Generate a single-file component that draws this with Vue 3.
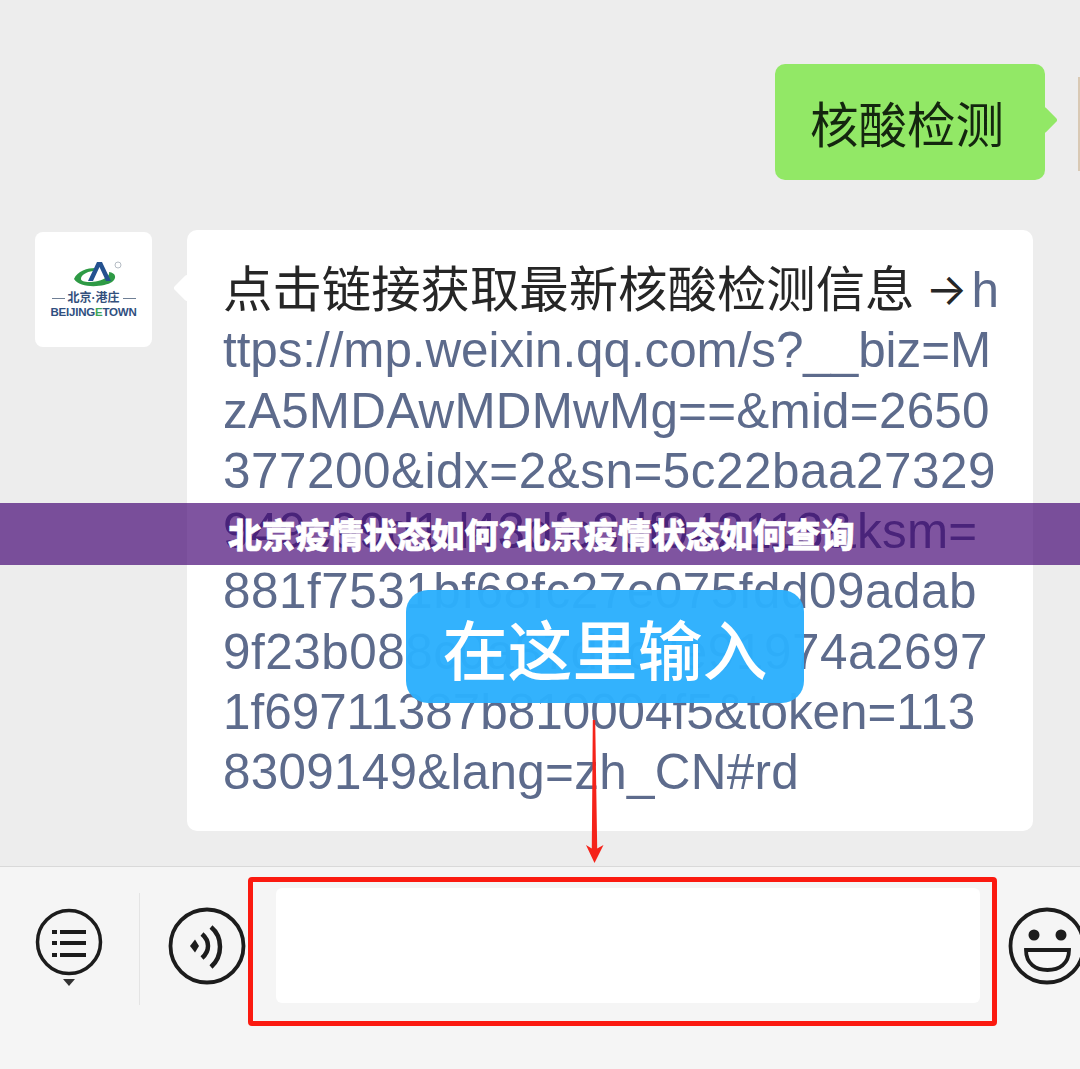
<template>
  <div class="screen">
    <div class="chat">
      <div class="row sent">
        <div class="bubble green">核酸检测</div>
        <div class="other-avatar"></div>
      </div>
      <div class="row received">
        <div class="avatar">
          <svg class="logo" width="50" height="28" viewBox="0 0 50 28">
            <path d="M2 18C5 10 16 7 23 7L21 10C14 11 9 14 9 18C9 21 17 22 26 20C34 18 38 14 37 11C44 12 45 17 40 21C33 26 8 28 2 18Z" fill="#2e9a45" />
            <path d="M25 1H30L39 20H34L27.500 6L21 20H16Z" fill="#24518f" />
            <circle cx="46" cy="4" r="3" fill="none" stroke="#b5bcc4" stroke-width="1" />
          </svg>
          <div class="logo-cn"><i></i>北京·港庄<i></i></div>
          <div class="logo-en">BEIJING<span>E</span>TOWN</div>
        </div>
        <div class="bubble white">
          <div class="line">点击链接获取最新核酸检测信息<span class="arrow-glyph">→</span><span class="link">h</span></div>
          <div
            v-for="l in linkLines"
            :key="l.text"
            class="line link"
            :style="{ letterSpacing: l.track + 'px' }"
          >{{ l.text }}</div>
        </div>
      </div>
    </div>

    <div class="bar">
      <svg class="ico-menu" width="72" height="84" viewBox="0 0 72 84">
        <circle cx="36" cy="36" r="31.500" fill="none" stroke="#1c1c1c" stroke-width="3.500" />
        <path d="M19 26H24M27 26H53M19 37H24M27 37H53M19 49H24M27 49H53" stroke="#1c1c1c" stroke-width="4" />
        <path d="M30 73H42L36 80Z" fill="#333" />
      </svg>
      <div class="sep"></div>
      <svg class="ico" width="80" height="80" viewBox="0 0 80 80">
        <circle cx="40" cy="40" r="36.500" fill="none" stroke="#1c1c1c" stroke-width="3.800" />
        <path d="M23 40L28 33.500L32 40L28 46.500Z" fill="#1c1c1c" />
        <path d="M35 28C43 35 43 45 35 52M44 21C56 31 56 50 44 61" fill="none" stroke="#1c1c1c" stroke-width="4.500" />
      </svg>
      <div class="input-box">
        <div class="input"></div>
      </div>
      <svg class="ico emoji" width="80" height="80" viewBox="0 0 80 80">
        <circle cx="40" cy="40" r="36.500" fill="none" stroke="#1c1c1c" stroke-width="3.800" />
        <circle cx="27" cy="29" r="5.500" fill="#1c1c1c" />
        <circle cx="54" cy="29" r="5.500" fill="#1c1c1c" />
        <path d="M19 44H62C62 58 52 64 40.500 64S19 58 19 44Z" fill="#f7f7f7" stroke="#1c1c1c" stroke-width="3.800" />
      </svg>
    </div>

    <div class="tip">在这里输入</div>
    <svg class="arrow" width="30" height="148" viewBox="580 718 30 148">
      <path d="M592.800 720H595.200L597.200 848.500L603.500 845L594.500 863L586 845L591.800 848.500Z" fill="#f5231a" />
    </svg>
    <div class="band">北京疫情状态如何?北京疫情状态如何查询</div>
  </div>
</template>

<script setup>
const linkLines = [
  { text: 'ttps://mp.weixin.qq.com/s?__biz=M', track: -0.06 },
  { text: 'zA5MDAwMDMwMg==&mid=2650', track: 0.25 },
  { text: '377200&idx=2&sn=5c22baa27329', track: 0.54 },
  { text: '949c99d1d43dfc8df942113&ksm=', track: 0.25 },
  { text: '881f7531bf68fc27e075fdd09adab', track: 0.52 },
  { text: '9f23b088c0a87d4c8e91974a2697', track: 0.54 },
  { text: '1f69711387b810004f5&token=113', track: 0 },
  { text: '8309149&lang=zh_CN#rd', track: 0.29 }
]
</script>

<style>
html, body {
  margin: 0;
  background: #ededed;
}
</style>

<style scoped>
.screen {
  position: relative;
  width: 1080px;
  height: 1069px;
  overflow: hidden;
  display: flex;
  flex-direction: column;
  background: #ededed;
  font-family: "Liberation Sans", "Noto Sans CJK SC", sans-serif;
}

.chat {
  flex: 1;
  padding-top: 64px;
  box-sizing: border-box;
}

.row {
  display: flex;
  align-items: flex-start;
}

.sent {
  justify-content: flex-start;
  padding-left: 775px;
  height: 116px;
}

.other-avatar {
  flex: none;
  width: 60px;
  height: 94px;
  margin: 13px 0 0 33px;
  background: #d9c9b4;
}

.received {
  margin-top: 50px;
  padding-left: 35px;
}

.avatar {
  flex: none;
  width: 117px;
  height: 115px;
  margin-top: 2px;
  background: #fff;
  border-radius: 8px;
  display: flex;
  flex-direction: column;
  align-items: center;
  padding-top: 29px;
  box-sizing: border-box;
}

.logo {
  margin-left: 6px;
}

.logo-cn {
  display: flex;
  align-items: center;
  gap: 3px;
  margin-top: 2px;
  font-size: 12px;
  line-height: 14px;
  font-weight: 700;
  color: #33507c;
}

.logo-cn i {
  width: 13px;
  height: 1px;
  background: #6f7f95;
}

.logo-en {
  margin-top: 1px;
  font-size: 11.500px;
  line-height: 13px;
  font-weight: 700;
  letter-spacing: -0.2px;
  color: #2f4f80;
}

.logo-en span {
  color: #3fa45a;
}

.bubble {
  position: relative;
  box-sizing: border-box;
  border-radius: 10px;
}

.bubble::after {
  content: "";
  position: absolute;
  width: 20px;
  height: 20px;
  transform: rotate(45deg);
  border-radius: 3px;
}

.green {
  flex: none;
  width: 270px;
  height: 116px;
  background: #92e866;
  color: #14260f;
  font-size: 48.500px;
  line-height: 116px;
  padding-left: 35px;
  font-family: "Noto Sans CJK SC", sans-serif;
}

.green::after {
  right: -9px;
  top: 46px;
  background: #92e866;
}

.white {
  flex: none;
  width: 846px;
  height: 601px;
  margin-left: 35px;
  padding: 30px 0 0 36px;
  background: #fff;
  color: #262626;
  font-size: 49.400px;
  line-height: 60.300px;
}

.white::after {
  left: -10px;
  top: 48px;
  background: #fff;
}

.line {
  height: 60.300px;
  white-space: nowrap;
}

.arrow-glyph {
  margin: 0 4px 0 11px;
  font-family: Inter, sans-serif;
  font-size: 44px;
  line-height: 1;
  vertical-align: 2px;
}

.link {
  color: #5d6b8c;
}

.bar {
  flex: none;
  height: 203px;
  box-sizing: border-box;
  display: flex;
  align-items: flex-start;
  padding: 10px 0 0 33px;
  background: #f5f5f5;
  border-top: 1px solid #d9d9d9;
}

.ico-menu,
.ico {
  flex: none;
  margin-top: 29px;
}

.sep {
  flex: none;
  width: 1px;
  height: 112px;
  margin: 16px 27px 0 34px;
  background: #e4e4e4;
}

.input-box {
  flex: none;
  width: 749px;
  height: 149px;
  margin-left: 1px;
  padding: 6px 12px 18px 23px;
  box-sizing: border-box;
  display: flex;
  border: 5px solid #fb1a10;
  border-radius: 4px;
}

.input {
  flex: 1;
  background: #fff;
  border-radius: 6px;
}

.emoji {
  margin-left: 10px;
}

.tip {
  position: absolute;
  left: 406px;
  top: 590px;
  width: 398px;
  height: 113px;
  display: flex;
  align-items: center;
  justify-content: center;
  border-radius: 22px;
  background: rgba(44, 176, 253, 0.97);
  color: #fff;
  font-family: "Noto Sans CJK SC", sans-serif;
  font-size: 65px;
  font-weight: 500;
}

.arrow {
  position: absolute;
  left: 580px;
  top: 718px;
}

.band {
  position: absolute;
  left: 0;
  right: 0;
  top: 503px;
  height: 62px;
  padding: 0 0 2px 228px;
  box-sizing: border-box;
  display: flex;
  align-items: center;
  background: rgba(64, 0, 113, 0.67);
  color: #fff;
  font-family: "Noto Sans CJK SC", sans-serif;
  font-size: 33.800px;
  font-weight: 900;
  -webkit-text-stroke: 0.6px #fff;
  white-space: nowrap;
}
</style>
